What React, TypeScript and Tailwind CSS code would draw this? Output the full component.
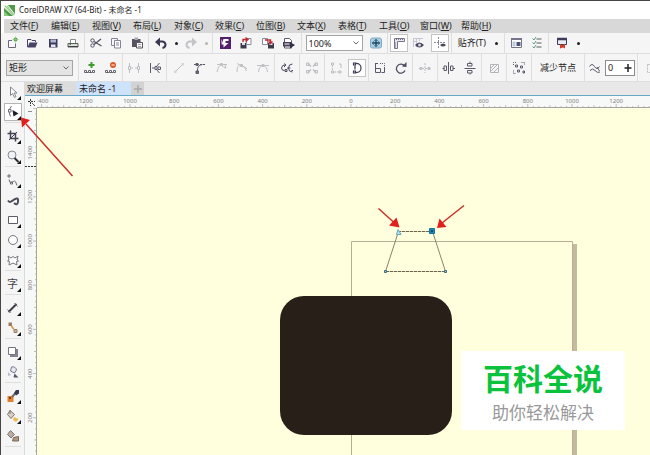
import type { ReactNode } from "react";
import clsx from "clsx";

const MENUS = [
  ["文件", "F"],
  ["编辑", "E"],
  ["视图", "V"],
  ["布局", "L"],
  ["对象", "C"],
  ["效果", "C"],
  ["位图", "B"],
  ["文本", "X"],
  ["表格", "T"],
  ["工具", "O"],
  ["窗口", "W"],
  ["帮助", "H"],
];

// distance in pixels between two labelled ruler marks (200 units)
const STEP = 44.2;

const ICONS: Record<string, ReactNode> = {
  new: (
    <>
      <path d="M8 5.500h-3.500v7h7v-4" fill="#fafafa" stroke="#6b6678" />
      <circle cx="11.500" cy="4.500" r="2" fill="#4aa63c" />
      <path d="M11.500 1.500v6M8.500 4.500h6" stroke="#8cc982" strokeWidth=".8" />
    </>
  ),
  open: (
    <>
      <path d="M3.500 12V4.500h3.500l1 1h3.500V7" fill="none" stroke="#4a4368" />
      <path d="M3.500 12.500l2-5h8l-2 5z" fill="#4a4368" />
    </>
  ),
  save: (
    <>
      <path d="M4 4h8.500v8.500h-8.500z" fill="#3e3a5c" />
      <path d="M5.500 4.500h5.500v3h-5.500z" fill="#aeb9cf" />
      <path d="M6 9.500h4.500v2.500h-4.500z" fill="#e6e8ef" />
    </>
  ),
  print: (
    <>
      <path d="M5.500 8V4.500h5V8" fill="#fff" stroke="#8a8a8a" />
      <path d="M3 8.500h10v3.500h-10z" fill="#dcdcdc" stroke="#5e5e5e" />
      <path d="M3 11.500h10" stroke="#444" />
      <path d="M4.500 9.500h1.500" stroke="#3aa03a" />
    </>
  ),
  cut: (
    <g fill="none" stroke="#555064">
      <path d="M6 6.500l7.500 4.500M6 9.500L13 4" strokeWidth="1.300" />
      <circle cx="4.500" cy="5.500" r="1.700" />
      <circle cx="4.500" cy="10.500" r="1.700" />
    </g>
  ),
  copy: (
    <g stroke="#85839a">
      <path d="M3.500 3.500h6v7h-6z" fill="#f5f5fa" />
      <path d="M6.500 5.500h6v7.500h-6z" fill="#fff" />
      <path d="M8 8h3M8 10h3" />
    </g>
  ),
  paste: (
    <>
      <path d="M3 4h8.500v8h-8.500z" fill="#585260" />
      <path d="M5.500 2.500h3.500v2.500h-3.500z" fill="#a9a9b0" />
      <path d="M7.500 7.500h6v5.500h-6z" fill="#f4f4f4" stroke="#5b5763" />
      <path d="M9 9.500h3M9 11.500h3" stroke="#aaa" />
    </>
  ),
  undo: (
    <>
      <path d="M2 7l5-4.500v9z" fill="#3c3752" />
      <path d="M5 6.500h4.500q3 .5 3 3.500-.5 2.500-3 3" fill="none" stroke="#3c3752" strokeWidth="2" />
    </>
  ),
  redo: (
    <>
      <path d="M14 7l-5-4.500v9z" fill="#c4c4c8" />
      <path d="M11 6.500h-4.500q-3 .5-3 3.500 .5 2.500 3 3" fill="none" stroke="#c4c4c8" strokeWidth="2" />
    </>
  ),
  connect: (
    <>
      <path d="M3 2h11v12h-11z" fill="#54206e" />
      <path d="M6.500 4h5v2h-3v2h3l-5 4.500V9.500h-2z" fill="#fff" />
      <path d="M4.500 4.500v4" stroke="#b08cc4" />
    </>
  ),
  importFile: (
    <>
      <path d="M2.500 8h6v5.500h-6z" fill="#3e3a4c" />
      <path d="M4 8h3v2h-3z" fill="#dedee6" />
      <path d="M8.500 3.500h4.500v6h-4.500z" fill="#fff" stroke="#8c8b99" />
      <path d="M5 7V4.500h4M7.500 2.500l2.500 2-2.500 2" fill="none" stroke="#c1272d" strokeWidth="1.400" />
    </>
  ),
  exportFile: (
    <>
      <path d="M2.500 3.500h5v6h-5z" fill="#fff" stroke="#8c8b99" />
      <path d="M8 8h6v5.500h-6z" fill="#3e3a4c" />
      <path d="M9.500 8h3v2h-3z" fill="#dedee6" />
      <path d="M5 5h5.500v3M8.500 6.500l2 2 2-2" fill="none" stroke="#c1272d" strokeWidth="1.400" />
    </>
  ),
  publish: (
    <>
      <path d="M3.500 13V3.500h5l2 2V13z" fill="#fff" stroke="#5d5b6b" />
      <path d="M2 7h8v4.500h-8z" fill="#454154" />
      <path d="M3.500 9h5" stroke="#fff" />
      <path d="M9 7l5 3-5 3.500z" fill="#363147" />
    </>
  ),
  fullscreen: (
    <>
      <rect x="2.500" y="3" width="11" height="10" rx="2" fill="#a9d0e4" stroke="#7fa9c2" />
      <path d="M8 4v8M4 8h8" stroke="#1c4058" strokeWidth="1.300" />
      <path d="M5.500 6v4M10.500 6v4M6 5.500h4M6 10.500h4" stroke="#3f718c" strokeWidth=".7" />
    </>
  ),
  rulers: (
    <>
      <path d="M3.500 3.500h10v3h-7v7h-3z" fill="#e6e6ee" stroke="#78768a" />
      <path d="M5.500 4v1M7.500 4v1M9.500 4v1M11.500 4v1M4 8h1M4 10h1M4 12h1" stroke="#78768a" />
    </>
  ),
  grid: (
    <>
      <path d="M2.500 3v9M5.500 3v9M8.500 3v3M2 3.500h10M2 6.500h4" stroke="#c6c6d0" />
      <path d="M4 10q4.500-5 9 0-4.500 5-9 0z" fill="#4b465b" />
      <circle cx="8.500" cy="10" r="1.500" fill="#cfd6e6" />
    </>
  ),
  guides: (
    <>
      <path d="M6.500 2v11M2 7.500h11" stroke="#89889a" strokeDasharray="2 1" />
      <path d="M8 10q3-3 6 0-3 3-6 0z" fill="#4b465b" />
    </>
  ),
  options: (
    <>
      <path d="M3.500 3.500h10v9h-10z" fill="#fff" stroke="#77758a" />
      <path d="M3 4h11" stroke="#77758a" strokeWidth="2" />
      <path d="M4.500 6.500h3v5h-3z" fill="#bfcadd" />
      <path d="M8.500 7h4v4h-4z" fill="#4c567a" />
    </>
  ),
  checklist: (
    <>
      <path d="M7.500 4h5M7.500 8h5M7.500 12h5" stroke="#8e8e95" strokeWidth="1.500" />
      <path d="M3.500 3.500l1.500 1.500 2-3M3.500 7.500l1.500 1.500 2-3M3.500 11.500l1.500 1.500 2-3" fill="none" stroke="#5d9c7c" />
    </>
  ),
  launcher: (
    <>
      <path d="M3.500 3.500h9v6h-9z" fill="#e8ecf4" stroke="#3e3a5c" />
      <path d="M3 4h10" stroke="#3e3a5c" strokeWidth="2.500" />
      <path d="M6 9l2 1 3-1v4.500l-2-1-3 1z" fill="#d23c2a" />
    </>
  ),
  addNode: (
    <>
      <path d="M9.500 2v6M6.500 5h6" stroke="#3f9a2f" strokeWidth="2" />
      <path d="M2.500 10.500h2v2h-2zM6.500 10.500h2v2h-2zM10.500 10.500h2v2h-2z" fill="#fff" stroke="#66646f" />
      <path d="M4 12.500h2M8 12.500h2" stroke="#66646f" />
    </>
  ),
  removeNode: (
    <>
      <circle cx="10" cy="5" r="3" fill="#e0582a" />
      <path d="M8.500 5h3" stroke="#fff" />
      <path d="M2.500 10.500h2v2h-2zM6.500 10.500h2v2h-2zM10.500 10.500h2v2h-2z" fill="#fff" stroke="#66646f" />
      <path d="M4 12.500h2M8 12.500h2" stroke="#66646f" />
    </>
  ),
  joinNodes: (
    <g fill="none" stroke="#bdbdc2">
      <path d="M3.500 3v3M3.500 10v3M12.500 3v3M12.500 10v3M5 8h2M9 8h2" />
      <path d="M2.500 6.500h2v3h-2zM11.500 6.500h2v3h-2z" />
    </g>
  ),
  breakCurve: (
    <g fill="none" stroke="#5c596b">
      <path d="M3.500 3v10M12.500 3l-3 3.500M9.500 9.500l3 3.500" />
      <path d="M5 8h3M8 6.500v3h2v-3zM11 7h2.500v2.500h-2.500z" />
    </g>
  ),
  toLine: (
    <>
      <path d="M4.500 11.500l7-7" stroke="#bdbdc2" />
      <path d="M3 10.500h2.500v2.500h-2.500zM10.500 3h2.500v2.500h-2.500z" fill="#d5d5d9" />
    </>
  ),
  toCurve: (
    <g fill="none" stroke="#5c596b">
      <path d="M5.500 11q-.5-6 5-6.500" />
      <path d="M2 4.500h12" strokeDasharray="2 1" />
      <path d="M4 11h2.500v2.500h-2.500zM4 3.500h2v2h-2z" fill="#6f6d7c" />
    </g>
  ),
  cusp: (
    <g fill="none" stroke="#c0c0c5">
      <path d="M3 4.500h10M3 12q1-6 4-7.500M7.500 5q2 3 4.500 3l-1-3" />
      <path d="M6.500 3.500h2v2h-2z" />
    </g>
  ),
  smooth: (
    <g fill="none" stroke="#c0c0c5">
      <path d="M3 3.500l10 5M3 12q0-7 4-7 4 1 5.500 6" />
      <path d="M6.500 4.500h2v2h-2z" />
    </g>
  ),
  symmetric: (
    <g fill="none" stroke="#c0c0c5">
      <path d="M2 5.500h12M3.500 12q.5-6 4.500-6.500 4 .5 4.500 6.500" />
      <path d="M7 4.500h2v2h-2z" />
    </g>
  ),
  reverse: (
    <g fill="none" stroke="#4f4b60">
      <path d="M6.500 5q-3.500-.5-4 3 .5 3 3 2.500M5 3.500l2 1.500-2 2" />
      <path d="M13.500 4q-4 0-4 4t4 4M8 8h3.500" />
      <path d="M6 9.500h2v2h-2zM12.500 10.500h1.500" />
    </g>
  ),
  extend: (
    <g fill="none" stroke="#bdbdc2">
      <path d="M4 3.500l3 3M12 3.500l-3 3M4 12.500l3-3M12 12.500l-3-3" strokeWidth="1.400" />
      <path d="M2.500 3h2.500v2.500h-2.500zM11 3h2.500v2.500h-2.500zM2.500 10.500h2.500v2.500h-2.500zM11 10.500h2.500v2.500h-2.500z" />
    </g>
  ),
  extract: (
    <g fill="none" stroke="#bdbdc2">
      <path d="M4.500 5v6M6 12h5" strokeDasharray="2 1" />
      <path d="M3.500 3h2v2h-2zM3.500 11h2v2h-2zM11 11h2v2h-2zM11 4h2v4" />
    </g>
  ),
  close: (
    <g fill="none" stroke="#3f3a55" strokeWidth="1.200">
      <path d="M6 3.500q6-.5 6 4.500t-6 4.500M6 5.500v4" />
      <path d="M4.500 3h2v2h-2zM4.500 11h2v2h-2z" />
    </g>
  ),
  stretch: (
    <g fill="none" stroke="#5c596b">
      <path d="M3.500 3v9.500h5v-4h-5" />
      <path d="M3 3.500h3M12.500 7v5.500h-3" />
      <path d="M8 3.500h4.500v3" strokeDasharray="1 1" />
    </g>
  ),
  rotate: (
    <>
      <path d="M11.500 6a4.500 4.500 0 1 0 .500 4.500" fill="none" stroke="#4f4b60" strokeWidth="1.300" />
      <path d="M9 6.500l4.500-4.500v5z" fill="#4f4b60" />
    </>
  ),
  alignNodes: (
    <g fill="none" stroke="#bdbdc2">
      <path d="M8 3v10M2 8.500h12" strokeDasharray="2 1" />
      <path d="M3 7.500h2v2h-2zM11 7.500h2v2h-2z" />
    </g>
  ),
  reflectH: (
    <g fill="none" stroke="#5c596b">
      <path d="M7.500 2v12M1.500 8.500h2M12 8.500h2" />
      <path d="M3 6h2.500v4.500h-2.500zM9.500 6h2.500v4.500h-2.500z" />
    </g>
  ),
  reflectV: (
    <g fill="none" stroke="#5c596b">
      <path d="M2.500 8.500h11M8 1.500v1.500M8 13v1.500" />
      <path d="M5.500 3.500h4.500v2.500h-4.500zM5.500 10.500h4.500v2.500h-4.500z" />
    </g>
  ),
  elastic: (
    <g fill="none" stroke="#b4b4bd">
      <path d="M4.500 4.500h8v8h-8z" />
      <path d="M4 9l5-5M4 12l8-8M7 13l6-6" />
    </g>
  ),
  selectAll: (
    <g fill="none" stroke="#5c596b">
      <path d="M2.500 5V2.500h3M10.500 2.500h3v3M2.500 10.500v3h3" strokeDasharray="1 1" />
      <path d="M4.500 5h2v2h-2zM9.500 6h2v2h-2zM6.500 10h2v2h-2zM12 11h1.500v2h-1.500z" />
    </g>
  ),
  curveSmooth: (
    <g fill="none" stroke="#5c596b">
      <path d="M2.500 6.500q2.500-4 5 0t5 0M3 10.500q2.500-3 5 0t5 1.500" />
      <path d="M10 7l2.500 4" />
    </g>
  ),
  bounding: (
    <path d="M4.500 4.500h8v8h-8z" fill="none" stroke="#bdbdc2" strokeDasharray="2 1" />
  ),
  pick: <path d="M5.500 3v8.500l2-2 2 4 1.500-1-2-3.500h3z" fill="#fff" stroke="#85838d" />,
  shape: (
    <>
      <path d="M6.500 2q-4 5-1 10.500" fill="none" stroke="#6d6b76" />
      <path d="M3.500 5.500h2.500v2.500h-2.500z" fill="#fff" stroke="#6d6b76" />
      <path d="M7.500 6l6 3.500-5 3z" fill="#1f1c2c" />
    </>
  ),
  crop: (
    <g fill="none" stroke="#454154" strokeWidth="1.500">
      <path d="M5.500 2.500v8h8M2.500 5.500h8v8" />
      <path d="M4 12l8-8" strokeWidth="1" />
    </g>
  ),
  zoom: (
    <>
      <circle cx="7" cy="7" r="4" fill="#eef2f7" stroke="#8a8892" />
      <path d="M9.500 10l4 4" stroke="#2f2c38" strokeWidth="2" />
    </>
  ),
  freehand: (
    <g fill="none" stroke="#6d6b76">
      <path d="M4 2v4M2 4h4" />
      <path d="M4 7.500q.5 4 2.500 3t3-1.500 2.500 4.500" />
      <path d="M5.500 10h2v2h-2z" />
    </g>
  ),
  artistic: (
    <path d="M3 8.500q1.500 2.500 4 .5t4.500-2.500 1.500 3.500-4 1" fill="none" stroke="#4e4b58" strokeWidth="2" />
  ),
  rectangle: <path d="M3.500 4.500h9v7h-9z" fill="#fff" stroke="#5d5b66" />,
  ellipse: <circle cx="8" cy="8" r="4.500" fill="#fff" stroke="#77757f" />,
  star: (
    <path d="M8 4.500l2 1.500 3-2-1 4 1.500 1-2 .5.5 3.500-4-2-4 2 .5-3.500-2-.5 1.500-1-1-4 3 2z" fill="#fff" stroke="#77757f" />
  ),
  dimension: (
    <>
      <path d="M3.500 12l8-8" stroke="#3f3c48" strokeWidth="2" />
      <path d="M2.500 9.500l3 3.500M9.500 3l3 3.500" stroke="#6d6b76" />
    </>
  ),
  connector: (
    <>
      <path d="M5.500 5l5 6" stroke="#8a6a4c" />
      <path d="M3.500 2.500h3.500v3.500h-3.500z" fill="#9c7c62" />
      <path d="M9 9.500h3v3h-3z" fill="#c9b5a3" stroke="#9c7c62" />
      <path d="M6.500 6l2 3" stroke="#e79a3d" strokeWidth="1.500" />
    </>
  ),
  shadow: (
    <>
      <path d="M5 5h8v8h-8z" fill="#85838f" />
      <path d="M3.500 3.500h7v7h-7z" fill="#fff" stroke="#77757f" />
    </>
  ),
  transparency: (
    <>
      <path d="M6.500 3q4-1 5 3l-2 3-4-2z" fill="#e6e8f2" stroke="#77758a" />
      <path d="M3 8l3 3-3 1z" fill="#b8bccf" />
      <path d="M9.500 9.500l4 4h-5z" fill="#56546a" />
    </>
  ),
  eyedropper: (
    <>
      <path d="M2.500 8h6v6h-6z" fill="#e0812c" />
      <path d="M4 9h2v2h-2z" fill="#8a3a18" />
      <path d="M7 9l3-3.500" stroke="#6d6b76" strokeWidth="2" />
      <path d="M9 5l2-3 3 0v3.500l-3 2z" fill="#39394d" />
    </>
  ),
  fill: (
    <>
      <path d="M5 2.500l4.500 4-3.500 4-3.500-4z" fill="#d8d1ca" stroke="#80756d" />
      <path d="M5 2v4" stroke="#80756d" />
      <path d="M9 9l4.500 2-2.500 3-3-2z" fill="#f0b84e" />
    </>
  ),
  smartFill: (
    <>
      <path d="M5.500 2.500l4 4-3.500 3.500-3.500-3.500z" fill="#b8aea6" stroke="#80756d" />
      <path d="M8.500 9.500l5-1v4.500h-6z" fill="#b5967a" stroke="#756a62" />
    </>
  ),
};

function Icon({ name }: { name: string }) {
  return (
    <svg viewBox="0 0 16 16" className="size-4 shrink-0" aria-hidden>
      {ICONS[name]}
    </svg>
  );
}

function ToolButton({ name, active }: { name: string; active?: boolean }) {
  return (
    <button
      type="button"
      aria-label={name}
      className={clsx(
        "flex size-4 shrink-0 items-center justify-center",
        active && "bg-white outline outline-[#c4c4c4]",
      )}
    >
      <Icon name={name} />
    </button>
  );
}

function Caret({ muted }: { muted?: boolean }) {
  return (
    <span
      className={clsx("size-[3px] shrink-0 rounded-full", muted ? "bg-[#b5b5b5]" : "bg-[#222222]")}
    />
  );
}

function Group({ width, last, children }: { width: string; last?: boolean; children: ReactNode }) {
  return (
    <div
      className={clsx(
        "flex h-full shrink-0 items-center justify-around px-px",
        width,
        !last && "border-r border-[#dedede]",
      )}
    >
      {children}
    </div>
  );
}

function Dropdown({ label, value, className }: { label: string; value: string; className: string }) {
  return (
    <div className={clsx("relative h-4 shrink-0", className)}>
      <select
        aria-label={label}
        defaultValue={value}
        className="size-full appearance-none border border-[#a5a5a5] bg-transparent pl-0.5 leading-none outline-none"
      >
        <option>{value}</option>
      </select>
      <svg viewBox="0 0 6 4" className="pointer-events-none absolute top-1.5 right-1 h-1 w-1.5" aria-hidden>
        <path d="M.5.5l2.500 2.500L5.500.5" fill="none" stroke="#666" />
      </svg>
    </div>
  );
}

function StandardBar() {
  return (
    <div className="flex h-[21px] items-center border-b border-[#dedede] bg-[#f5f5f5]">
      <Group width="w-[84px]">
        <ToolButton name="new" />
        <ToolButton name="open" />
        <ToolButton name="save" />
        <ToolButton name="print" />
      </Group>
      <Group width="w-16">
        <ToolButton name="cut" />
        <ToolButton name="copy" />
        <ToolButton name="paste" />
      </Group>
      <Group width="w-16">
        <ToolButton name="undo" />
        <Caret />
        <ToolButton name="redo" />
        <Caret muted />
      </Group>
      <Group width="w-[89px]">
        <ToolButton name="connect" />
        <ToolButton name="importFile" />
        <ToolButton name="exportFile" />
        <ToolButton name="publish" />
      </Group>
      <Group width="w-[86px]">
        <Dropdown label="缩放级别" value="100%" className="w-[57px] bg-white" />
        <ToolButton name="fullscreen" />
      </Group>
      <Group width="w-16">
        <ToolButton name="rulers" active />
        <ToolButton name="grid" />
        <ToolButton name="guides" active />
      </Group>
      <Group width="w-[53px]">
        <button type="button">贴齐(T)</button>
        <Caret />
      </Group>
      <Group width="w-11">
        <ToolButton name="options" />
        <ToolButton name="checklist" />
      </Group>
      <Group width="w-9" last>
        <ToolButton name="launcher" />
        <Caret />
      </Group>
    </div>
  );
}

function PropertyBar() {
  return (
    <div className="flex h-7 items-center overflow-hidden border-b border-[#dedede] bg-[#f5f5f5]">
      <Group width="w-[78px]">
        <Dropdown label="选取范围模式" value="矩形" className="w-[67px] bg-[#e4e4e4]" />
      </Group>
      <Group width="w-11">
        <ToolButton name="addNode" />
        <ToolButton name="removeNode" />
      </Group>
      <Group width="w-11">
        <ToolButton name="joinNodes" />
        <ToolButton name="breakCurve" />
      </Group>
      <Group width="w-11" last>
        <ToolButton name="toLine" />
        <ToolButton name="toCurve" />
      </Group>
      <Group width="w-16">
        <ToolButton name="cusp" />
        <ToolButton name="smooth" />
        <ToolButton name="symmetric" />
      </Group>
      <Group width="w-[25px]">
        <ToolButton name="reverse" />
      </Group>
      <Group width="w-[25px]">
        <ToolButton name="extend" />
      </Group>
      <Group width="w-11">
        <ToolButton name="extract" />
        <ToolButton name="close" active />
      </Group>
      <Group width="w-11">
        <ToolButton name="stretch" />
        <ToolButton name="rotate" />
      </Group>
      <Group width="w-[25px]">
        <ToolButton name="alignNodes" />
      </Group>
      <Group width="w-11">
        <ToolButton name="reflectH" />
        <ToolButton name="reflectV" />
      </Group>
      <Group width="w-[25px]">
        <ToolButton name="elastic" />
      </Group>
      <Group width="w-[25px]">
        <ToolButton name="selectAll" />
      </Group>
      <Group width="w-[53px]">
        <button type="button">减少节点</button>
      </Group>
      <Group width="w-[53px]">
        <Icon name="curveSmooth" />
        <div className="flex h-4 w-[30px] items-center border border-[#8c8c8c] bg-white">
          <input
            aria-label="曲线平滑度"
            defaultValue="0"
            className="w-4 min-w-0 flex-1 pl-0.5 outline-none"
          />
          <svg viewBox="0 0 8 8" className="mr-0.5 size-2" aria-hidden>
            <path d="M4 0v8M.5 4h7" stroke="#222" strokeWidth="1.500" />
          </svg>
        </div>
      </Group>
      <Group width="w-[25px]" last>
        <ToolButton name="bounding" />
      </Group>
    </div>
  );
}

// tools in the order of the toolbox; flyout tools carry the corner mark
const TOOL_GROUPS = [
  [["pick", true], ["shape", true]],
  [["crop", true], ["zoom", true]],
  [["freehand", true], ["artistic", false], ["rectangle", true], ["ellipse", true], ["star", true]],
  [["text", true]],
  [["dimension", true], ["connector", true]],
  [["shadow", true], ["transparency", false]],
  [["eyedropper", true], ["fill", true], ["smartFill", false]],
] as [string, boolean][][];

function Toolbox() {
  return (
    <div className="flex w-6 shrink-0 flex-col items-center border-r border-[#dadada] bg-[#f5f5f5]">
      {TOOL_GROUPS.map((tools, idx) => (
        <div key={idx} className="mb-[3px] border-b border-[#dedede]">
          {tools.map(([name, flyout]) => (
            <button
              key={name}
              type="button"
              aria-label={name}
              className="relative flex h-5 w-4 items-center justify-center"
            >
              <span
                className={clsx(
                  "flex size-4 items-center justify-center",
                  name === "shape" && "bg-white outline outline-[#b5b5b5]",
                )}
              >
                {name === "text" ? <span className="text-[11px] text-[#44424c]">字</span> : <Icon name={name} />}
              </span>
              {flyout && (
                <svg viewBox="0 0 4 4" className="absolute right-0 bottom-0.5 size-1" aria-hidden>
                  <path d="M4 0v4H0z" fill="#111" />
                </svg>
              )}
            </button>
          ))}
        </div>
      ))}
    </div>
  );
}

const H_MARKS = [-7, -6, -5, -4, -3, -2, -1, 0, 1, 2, 3, 4, 5, 6];
const V_MARKS = [-3, -2, -1, 0, 1, 2, 3, 4];
const TICKS = [0, 1, 2, 3, 4, 5, 6, 7];

function HorizontalRuler() {
  return (
    <svg className="h-3 min-w-0 flex-1 bg-[#f7f8f8]" aria-hidden>
      <g transform="translate(314 0)">
        {H_MARKS.map((n) => (
          <g key={n}>
            <text x={n * STEP} y="7" textAnchor="middle" fontSize="6" fill="#808080">
              {Math.abs(n * 200)}
            </text>
            {TICKS.map((t) => (
              <path
                key={t}
                d={`M${n * STEP + (t * STEP) / 8} ${t === 0 ? 8 : t === 4 ? 9 : 10}V12`}
                stroke="#a5a5a5"
                strokeWidth=".7"
              />
            ))}
          </g>
        ))}
        <path d="M-400 11.500H4000" stroke="#a5a5a5" />
      </g>
    </svg>
  );
}

function VerticalRuler() {
  return (
    <svg className="w-3 shrink-0 bg-[#f7f8f8]" aria-hidden>
      <g transform="translate(0 133)">
        {V_MARKS.map((n) => (
          <g key={n} transform={`translate(0 ${n * STEP})`}>
            {n > -3 && (
              <text transform="translate(7 0) rotate(-90)" textAnchor="middle" fontSize="6" fill="#808080">
                {Math.abs(1000 - n * 200)}
              </text>
            )}
            {TICKS.map((t) => (
              <path
                key={t}
                d={`M${t === 0 ? 8 : t === 4 ? 9 : 10} ${(t * STEP) / 8}H12`}
                stroke="#a5a5a5"
                strokeWidth=".7"
              />
            ))}
          </g>
        ))}
        <path d="M11.500-400V4000" stroke="#a5a5a5" />
        <path d="M0 -74.500H11" stroke="#333" strokeDasharray="2 1" />
        <path d="M3 -129.500H7" stroke="#8d8d8d" />
      </g>
    </svg>
  );
}

function Drawing() {
  return (
    <div className="relative min-w-0 flex-1 overflow-hidden bg-[#ffffdd]">
      <svg className="absolute inset-0 size-full" aria-hidden>
        <g transform="translate(-37 -108)">
          <path d="M573 244h4v400h-4z" fill="#c5baa0" />
          <path d="M351.500 640V241.500h221V640" fill="none" stroke="#b3b096" />
          <rect x="280" y="296" width="172" height="139" rx="24" fill="#281f19" />
          <path d="M398.500 231.500L385.500 271.500M432.500 231.500L445.500 271.500" stroke="#8a8468" />
          <path d="M398 231.500H432M386 271.500H446" stroke="#d8c8a0" />
          <path d="M398 231.500H432M386 271.500H446" stroke="#6b6450" strokeDasharray="3 1" />
          <path d="M384.500 270.500h2v2h-2zM444.500 270.500h2v2h-2z" fill="#8ecbe0" stroke="#3d6c80" />
          <path d="M396.500 234.500l1.500-5 3 5z" fill="#bfe6ef" stroke="#5ba7bd" />
          <path d="M429.500 228.500h5v5h-5z" fill="#1c87b8" stroke="#1673a0" />
          <path d="M431 230h2v2h-2z" fill="#124d6c" />
        </g>
      </svg>
      <div className="absolute top-[243px] left-[424px] flex h-[79px] w-[164px] flex-col items-center justify-center bg-white">
        <span className="text-[30px] leading-[44px] font-bold text-[#0bc23c]">百科全说</span>
        <span className="text-[17px] leading-6 text-[#999999]">助你轻松解决</span>
      </div>
    </div>
  );
}

function Annotations() {
  return (
    <svg className="pointer-events-none absolute inset-0 size-full" aria-hidden>
      <g transform="translate(-1 -1)">
        <path d="M72.500 176L26 124M378.500 208.500L394 222.500M464 205.500L442 223" stroke="#c9302c" strokeWidth="1.500" />
        <path d="M21 117.500l9 2.500-8 7.500zM399.500 227.500l-10.500-2 7.500-8zM437 228l2.500-9.500 7 8.500z" fill="#e0201c" />
      </g>
    </svg>
  );
}

export default function App() {
  return (
    <div className="relative flex min-h-screen flex-col overflow-hidden border-t border-l border-[#4a4646] bg-white font-['Noto_Sans','Noto_Sans_CJK_SC',sans-serif] text-[9px] leading-3 text-[#222222]">
      <header className="flex h-[18px] shrink-0 items-center gap-1 pl-[3px]">
        <svg viewBox="0 0 11 11" className="size-[11px]" aria-hidden>
          <path d="M0 0h11v11H0z" fill="#4f9a49" />
          <path d="M0 0h4L11 9v2H9L0 3z" fill="#e5f3df" />
          <path d="M1 1l8 9M3 1l7 9" stroke="#5fae55" strokeWidth=".7" />
          <path d="M0 6l5 5H0z" fill="#8cc77d" />
        </svg>
        <h1 className="text-[8px]">CorelDRAW X7 (64-Bit) - 未命名 -1</h1>
      </header>

      <nav className="ml-[3px] flex h-3.5 shrink-0 items-center bg-[#d8d8d8] pl-1.5">
        {MENUS.map(([label, key]) => (
          <button key={label} type="button" className="w-[41px] shrink-0 text-left whitespace-nowrap">
            {label}(<u>{key}</u>)
          </button>
        ))}
      </nav>

      <StandardBar />
      <PropertyBar />

      <div className="flex flex-1">
        <Toolbox />
        <main className="flex min-w-0 flex-1 flex-col">
          <div className="flex h-3.5 shrink-0 border-b border-[#66a9c6] bg-[#e8e8e8]">
            <button type="button" className="w-[51px] bg-[#dcdcdc] pl-0.5 text-left">
              欢迎屏幕
            </button>
            <button type="button" className="w-[55px] bg-[#cde3fb] pl-[3px] text-left">
              未命名 -1
            </button>
            <button type="button" aria-label="新建文档" className="flex w-[13px] items-center justify-center bg-[#d2d2d2]">
              <svg viewBox="0 0 8 8" className="size-2" aria-hidden>
                <path d="M4 0v8M0 4h8" stroke="#a8a8a8" strokeWidth="1.500" />
              </svg>
            </button>
          </div>
          <div className="flex h-3 shrink-0">
            <svg viewBox="0 0 12 12" className="size-3 shrink-0 bg-[#f7f8f8]" aria-hidden>
              <path d="M5.500 3v7M3 5.500h7" stroke="#333" strokeDasharray="2 1" />
              <path d="M7 7l3 3" stroke="#555" />
            </svg>
            <HorizontalRuler />
          </div>
          <div className="flex flex-1">
            <VerticalRuler />
            <Drawing />
          </div>
        </main>
      </div>
      <Annotations />
    </div>
  );
}
